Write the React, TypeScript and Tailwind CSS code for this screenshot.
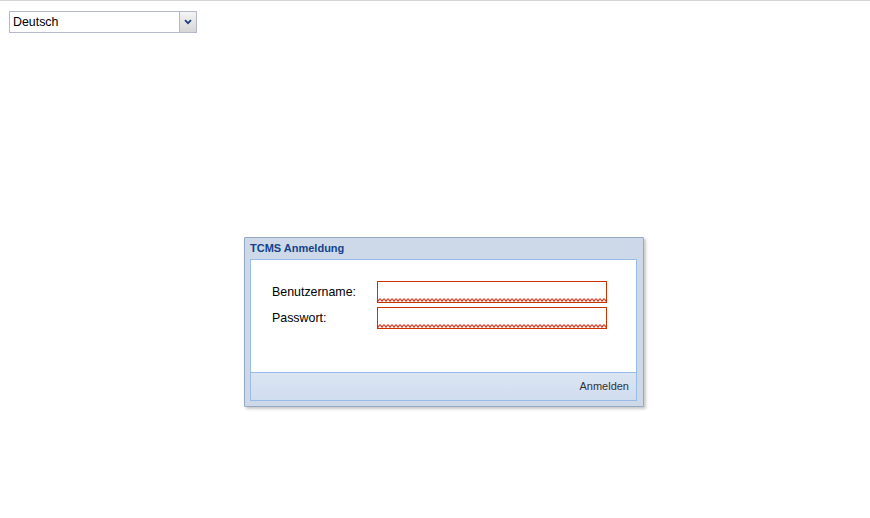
function Field({ label }: { label: string }) {
  return (
    <div className="flex items-center h-[22px]">
      <label className="w-[105px] text-[12.4px] text-black">{label}</label>
      <div className="relative w-[230px] h-[22px] border border-[#cc3300] bg-white">
        <input className="w-full h-full outline-none bg-transparent px-[3px] text-[12px]" />
        <svg className="absolute left-0 right-0 bottom-0 w-full h-[4px]" preserveAspectRatio="none">
          <defs>
            <pattern id={`zig-${label}`} width="4" height="4" patternUnits="userSpaceOnUse">
              <path d="M0 3.5 L1.5 1 L2.5 1 L4 3.5" fill="none" stroke="#d8361a" strokeWidth="1.2" />
            </pattern>
          </defs>
          <rect width="100%" height="4" fill={`url(#zig-${label})`} />
        </svg>
      </div>
    </div>
  );
}

export default function App() {
  return (
    <div className="min-h-[518px] bg-white border-t border-[#d4d4d4] font-['Liberation_Sans',Arial,sans-serif]">
      <div className="ml-[9px] mt-[10px] flex w-[188px] h-[22px]">
        <div className="flex-1 border border-r-0 border-[#b5b8c8] bg-white pl-[3px] text-[12.4px] leading-[20px] text-black">
          Deutsch
        </div>
        <div className="w-[18px] h-[22px] flex items-center justify-center border border-[#b5b8c8] bg-gradient-to-b from-[#f4f4f4] to-[#d6d6d6]">
          <svg width="8" height="6" viewBox="0 0 8 6">
            <path d="M1 1.2 L4 4.2 L7 1.2" fill="none" stroke="#1f3f80" strokeWidth="1.8" />
          </svg>
        </div>
      </div>

      <div className="ml-[244px] mt-[204px] w-[400px] h-[170px] border border-[#95a8c4] bg-[#cdd9e8] pl-[5px] pr-[6px] pb-[5px] flex flex-col shadow-[2px_2px_3px_rgba(0,0,0,0.22)] rounded-[1px]">
        <div className="h-[21px] flex items-center text-[11px] font-bold text-[#15428b]">TCMS Anmeldung</div>
        <div className="flex-1 flex flex-col border border-[#99bbe8]">
          <div className="h-[112px] bg-white pl-[21px] pt-[21px] flex flex-col gap-[4px]">
            <Field label="Benutzername:" />
            <Field label="Passwort:" />
          </div>
          <div className="flex-1 border-t border-[#99bbe8] bg-gradient-to-b from-[#dbe5f3] to-[#d0ddef] flex items-center justify-end pr-[7px]">
            <button className="text-[11px] text-[#333333] leading-none">Anmelden</button>
          </div>
        </div>
      </div>
    </div>
  );
}
